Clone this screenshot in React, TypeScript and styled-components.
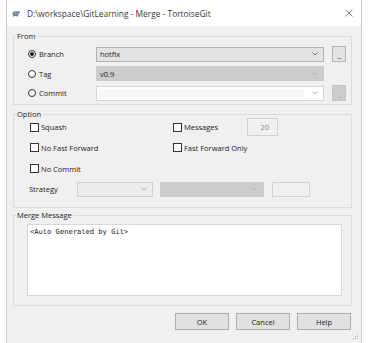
import React from 'react';
import styled, { createGlobalStyle } from 'styled-components';

const GlobalStyle = createGlobalStyle`
  html, body {
    margin: 0;
    padding: 0;
    background: #ffffff;
  }
  body {
    font-family: "Open Sans", "Noto Sans", sans-serif;
    font-size: 7.5px;
    color: #1b1b1b;
  }
`;

const Screen = styled.div`
  width: 377px;
  height: 343px;
  padding-left: 6px;
  box-sizing: border-box;
  overflow: hidden;
  background: #ffffff;
`;

const Window = styled.div`
  position: relative;
  width: 356px;
  height: 343px;
  box-sizing: border-box;
  border-left: 1px solid #c9c9c9;
  border-right: 1px solid #c9c9c9;
  display: flex;
  flex-direction: column;
`;

const TitleBar = styled.div`
  height: 26px;
  flex: none;
  display: flex;
  align-items: center;
  padding: 0 8px 0 5px;
  background: #ffffff;
`;

const TitleText = styled.span`
  flex: 1;
  margin-left: 7px;
  font-size: 8.4px;
  color: #3a3a3a;
`;

const CloseIcon = styled.svg`
  width: 8px;
  height: 8px;
`;

const Body = styled.div`
  flex: 1;
  background: #f0f0f0;
  padding: 6px 9px 0 6px;
  display: flex;
  flex-direction: column;
`;

const Group = styled.fieldset<{ $gap: number }>`
  margin: ${({ $gap }) => `${$gap}px 0 0 0`};
  padding: 0;
  border: 1px solid #dcdcdc;
  min-width: 0;
`;

const Legend = styled.legend`
  margin-left: 2px;
  padding: 0 1px;
  line-height: 8px;
  color: #1b1b1b;
`;

const FromGrid = styled.div`
  display: grid;
  grid-template-columns: 60px 228px 14px;
  column-gap: 8px;
  grid-auto-rows: 19.5px;
  align-items: center;
  padding: 4.5px 0 1px 14px;
`;

const RadioLabel = styled.label`
  display: flex;
  align-items: center;
  gap: 3px;
`;

const RadioDot = styled.span<{ $checked?: boolean }>`
  width: 8px;
  height: 8px;
  border-radius: 50%;
  border: 1px solid #333333;
  background: #ffffff;
  box-sizing: border-box;
  display: flex;
  align-items: center;
  justify-content: center;
  &::after {
    content: '';
    width: 4px;
    height: 4px;
    border-radius: 50%;
    background: ${({ $checked }) => ($checked ? '#1a1a1a' : 'transparent')};
  }
`;

type ComboKind = 'normal' | 'disabled' | 'edit' | 'light';

const comboBorder: Record<ComboKind, string> = {
  normal: '#b3b3b3',
  disabled: '#cccccc',
  edit: '#d6d6d6',
  light: '#cfcfcf',
};

const comboFill: Record<ComboKind, string> = {
  normal: '#e3e3e3',
  disabled: '#cccccc',
  edit: '#ffffff',
  light: '#ececec',
};

const Combo = styled.div<{ $kind: ComboKind; $width?: number; $offset?: number }>`
  height: 15px;
  width: ${({ $width }) => ($width ? `${$width}px` : 'auto')};
  flex: none;
  margin-left: ${({ $offset }) => ($offset ? `${$offset}px` : '0')};
  box-sizing: border-box;
  display: flex;
  align-items: center;
  padding: 0 5px 0 3px;
  border: 1px solid ${({ $kind }) => comboBorder[$kind]};
  background: ${({ $kind }) => comboFill[$kind]};
  color: #1b1b1b;
`;

const ComboValue = styled.span<{ $edit?: boolean }>`
  flex: 1;
  align-self: stretch;
  display: flex;
  align-items: center;
  margin: ${({ $edit }) => ($edit ? '2px 8px 2px -1px' : '0')};
  background: ${({ $edit }) => ($edit ? '#f6f6f6' : 'transparent')};
`;

const Chevron = styled.svg`
  width: 6px;
  height: 4px;
  flex: none;
`;

const DotsButton = styled.div<{ $disabled?: boolean }>`
  width: 14px;
  height: 16px;
  box-sizing: border-box;
  border: 1px solid ${({ $disabled }) => ($disabled ? '#c4c4c4' : '#b3b3b3')};
  background: ${({ $disabled }) => ($disabled ? '#cccccc' : '#e3e3e3')};
  color: ${({ $disabled }) => ($disabled ? '#9a9a9a' : '#333333')};
  display: flex;
  align-items: flex-end;
  justify-content: center;
  font-size: 7px;
  line-height: 9px;
  letter-spacing: -0.5px;
`;

const OptionGrid = styled.div`
  display: grid;
  grid-template-columns: 143px 74px 31px;
  grid-auto-rows: 18px;
  row-gap: 2.8px;
  align-items: center;
  padding: 0 0 9px 16px;
`;

const CheckLabel = styled.label`
  display: flex;
  align-items: center;
  gap: 2px;
  white-space: nowrap;
`;

const CheckBox = styled.span`
  width: 9px;
  height: 9px;
  flex: none;
  box-sizing: border-box;
  border: 1px solid #333333;
  background: #ffffff;
`;

const NumberBox = styled.div`
  height: 18px;
  box-sizing: border-box;
  border: 1px solid #d2d2d2;
  background: #f0f0f0;
  color: #8a8a8a;
  display: flex;
  align-items: center;
  justify-content: flex-end;
  padding-right: 8px;
`;

const StrategyRow = styled.div`
  grid-column: 1 / -1;
  display: flex;
  align-items: center;
  margin-left: -1px;
`;

const StrategyLabel = styled.span`
  width: 48px;
  flex: none;
`;

const PlainBox = styled.div`
  width: 38px;
  height: 15px;
  flex: none;
  margin-left: 8px;
  box-sizing: border-box;
  border: 1px solid #d2d2d2;
  background: #f0f0f0;
`;

const MessageWrap = styled.div`
  padding: 5px 9px 9px 13px;
`;

const MessageBox = styled.div`
  height: 72px;
  box-sizing: border-box;
  border: 1px solid #d9d9d9;
  background: #ffffff;
  padding: 2px 2px;
  font-family: "DejaVu Sans Mono", "Liberation Mono", monospace;
  font-size: 7.1px;
  line-height: 9px;
  color: #1b1b1b;
`;

const ButtonRow = styled.div`
  display: flex;
  justify-content: flex-end;
  gap: 7px;
  margin-top: 7px;
  padding-right: 1px;
`;

const Button = styled.div`
  width: 54px;
  height: 17px;
  box-sizing: border-box;
  border: 1px solid #adadad;
  background: #e1e1e1;
  display: flex;
  align-items: center;
  justify-content: center;
`;

const Grip = styled.svg`
  position: absolute;
  right: 2px;
  bottom: 3px;
  width: 6px;
  height: 6px;
`;

const ChevronIcon = ({ color }: { color: string }) => (
  <Chevron viewBox="0 0 6 4">
    <path d="M0.5 0.5 L3 3 L5.5 0.5" fill="none" stroke={color} strokeWidth="0.8" />
  </Chevron>
);

const TurtleIcon = () => (
  <svg width="8" height="8" viewBox="0 0 8 8">
    <ellipse cx="3.6" cy="4.6" rx="3" ry="2.3" fill="#6d7c8c" />
    <circle cx="6.7" cy="3.2" r="1.1" fill="#6d7c8c" />
    <path d="M2 4.2 L3.6 3.2 L5.2 4.2 L3.6 5.4 Z" fill="#a9b6c4" />
    <rect x="1" y="6.2" width="1.2" height="1.4" fill="#6d7c8c" />
    <rect x="4.8" y="6.2" width="1.2" height="1.4" fill="#6d7c8c" />
  </svg>
);

const Check = ({ label }: { label: string }) => (
  <CheckLabel>
    <CheckBox />
    {label}
  </CheckLabel>
);

export default function App() {
  return (
    <>
      <GlobalStyle />
      <Screen>
        <Window>
          <TitleBar>
            <TurtleIcon />
            <TitleText>D:\workspace\GitLearning - Merge - TortoiseGit</TitleText>
            <CloseIcon viewBox="0 0 8 8">
              <path d="M0.5 0.5 L7.5 7.5 M7.5 0.5 L0.5 7.5" stroke="#6b6b6b" strokeWidth="0.8" />
            </CloseIcon>
          </TitleBar>
          <Body>
            <Group $gap={0}>
              <Legend>From</Legend>
              <FromGrid>
                <RadioLabel>
                  <RadioDot $checked />
                  Branch
                </RadioLabel>
                <Combo $kind="normal">
                  <ComboValue>hotfix</ComboValue>
                  <ChevronIcon color="#5a5a5a" />
                </Combo>
                <DotsButton>...</DotsButton>

                <RadioLabel>
                  <RadioDot />
                  Tag
                </RadioLabel>
                <Combo $kind="disabled">
                  <ComboValue>v0.9</ComboValue>
                  <ChevronIcon color="#a8a8a8" />
                </Combo>
                <span />

                <RadioLabel>
                  <RadioDot />
                  Commit
                </RadioLabel>
                <Combo $kind="edit">
                  <ComboValue $edit />
                  <ChevronIcon color="#9a9a9a" />
                </Combo>
                <DotsButton $disabled>...</DotsButton>
              </FromGrid>
            </Group>

            <Group $gap={5}>
              <Legend>Option</Legend>
              <OptionGrid>
                <Check label="Squash" />
                <Check label="Messages" />
                <NumberBox>20</NumberBox>

                <Check label="No Fast Forward" />
                <Check label="Fast Forward Only" />
                <span />

                <Check label="No Commit" />
                <span />
                <span />

                <StrategyRow>
                  <StrategyLabel>Strategy</StrategyLabel>
                  <Combo $kind="light" $width={76}>
                    <ComboValue />
                    <ChevronIcon color="#9a9a9a" />
                  </Combo>
                  <Combo $kind="disabled" $width={104} $offset={7}>
                    <ComboValue />
                    <ChevronIcon color="#b0b0b0" />
                  </Combo>
                  <PlainBox />
                </StrategyRow>
              </OptionGrid>
            </Group>

            <Group $gap={3}>
              <Legend>Merge Message</Legend>
              <MessageWrap>
                <MessageBox>&lt;Auto Generated by Git&gt;</MessageBox>
              </MessageWrap>
            </Group>

            <ButtonRow>
              <Button>OK</Button>
              <Button>Cancel</Button>
              <Button>Help</Button>
            </ButtonRow>
          </Body>
          <Grip viewBox="0 0 6 6">
            <rect x="4" y="0" width="1" height="1" fill="#b5b5b5" />
            <rect x="2" y="2" width="1" height="1" fill="#b5b5b5" />
            <rect x="4" y="2" width="1" height="1" fill="#b5b5b5" />
            <rect x="0" y="4" width="1" height="1" fill="#b5b5b5" />
            <rect x="2" y="4" width="1" height="1" fill="#b5b5b5" />
            <rect x="4" y="4" width="1" height="1" fill="#b5b5b5" />
          </Grip>
        </Window>
      </Screen>
    </>
  );
}
